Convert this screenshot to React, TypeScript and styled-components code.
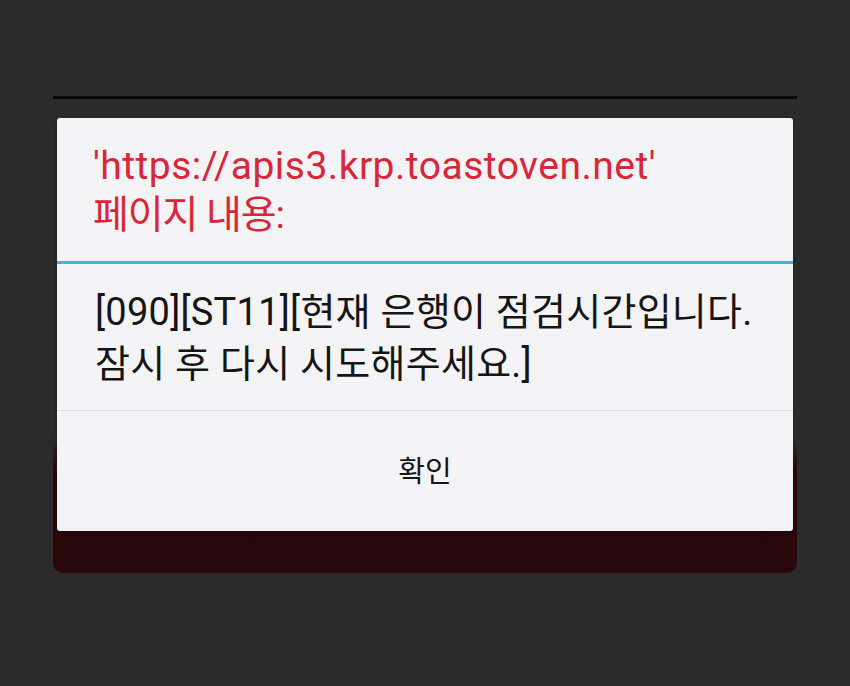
import React from 'react';
import styled, { createGlobalStyle } from 'styled-components';

const GlobalStyle = createGlobalStyle`
  html, body {
    margin: 0;
    padding: 0;
    background: #2b2b2b;
  }
  * {
    box-sizing: border-box;
  }
`;

const Screen = styled.div`
  width: 850px;
  height: 686px;
  padding: 96px 53px 0;
  background: #2b2b2b;
  font-family: Roboto, 'Noto Sans CJK KR', sans-serif;
`;

const TopRule = styled.div`
  height: 3px;
  background: #050505;
`;

const Stage = styled.div`
  height: 474px;
  padding: 19px 4px 0;
  border-radius: 0 0 10px 10px;
  background: linear-gradient(
    to bottom,
    rgba(41, 6, 10, 0) 0,
    rgba(41, 6, 10, 0) 340px,
    #29060a 372px,
    #2a070b 100%
  );
`;

const Dialog = styled.div`
  height: 413px;
  display: flex;
  flex-direction: column;
  background: #f4f3f5;
  border-radius: 3px;
  box-shadow: 0 1px 3px rgba(0, 0, 0, 0.35);
  overflow: hidden;
`;

const Header = styled.div`
  height: 146px;
  padding: 24px 36px 0;
  border-bottom: 3px solid #47b3d4;
`;

const TitleLine = styled.div<{ $spacing: number }>`
  color: #d8263b;
  font-size: 39px;
  line-height: 49px;
  letter-spacing: ${({ $spacing }) => $spacing}px;
  white-space: nowrap;
`;

const Message = styled.div`
  height: 147px;
  padding: 22px 38px 0;
  border-bottom: 1px solid #d9d8da;
  color: #151515;
  font-size: 38px;
  line-height: 52px;
  letter-spacing: 0.25px;
  white-space: nowrap;
`;

const ActionButton = styled.button`
  flex: 1;
  border: 0;
  background: transparent;
  font-family: 'Noto Sans CJK KR', Roboto, sans-serif;
  font-size: 29px;
  color: #151515;
  padding: 0 0 4px;
  cursor: pointer;
`;

export default function App() {
  return (
    <>
      <GlobalStyle />
      <Screen>
        <TopRule />
        <Stage>
          <Dialog>
            <Header>
              <TitleLine $spacing={0.5}>'https://apis3.krp.toastoven.net'</TitleLine>
              <TitleLine $spacing={-1.1}>페이지 내용:</TitleLine>
            </Header>
            <Message>
              [090][ST11][현재 은행이 점검시간입니다.
              <br />
              잠시 후 다시 시도해주세요.]
            </Message>
            <ActionButton>확인</ActionButton>
          </Dialog>
        </Stage>
      </Screen>
    </>
  );
}
